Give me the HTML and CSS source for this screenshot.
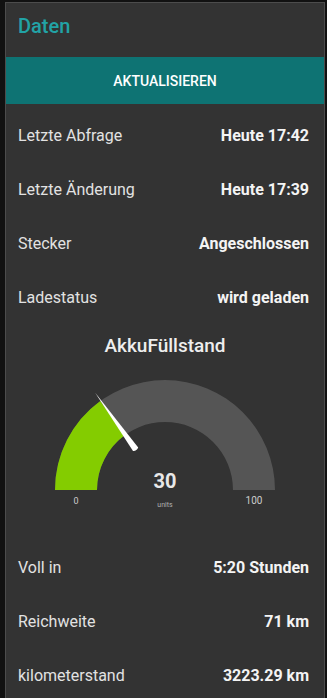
FILE: index.html
```html
<!DOCTYPE html>
<html lang="de">
<head>
    <meta charset="UTF-8">
    <meta name="viewport" content="width=device-width, initial-scale=1.0">
    <title>Daten</title>
    <link rel="stylesheet" href="styles.css">
</head>
<body>
    <div class="group">
        <h2 class="group-title">Daten</h2>
        <button class="refresh">Aktualisieren</button>

        <div class="row"><span class="label">Letzte Abfrage</span><span class="value">Heute 17:42</span></div>
        <div class="row"><span class="label">Letzte Änderung</span><span class="value">Heute 17:39</span></div>
        <div class="row"><span class="label">Stecker</span><span class="value">Angeschlossen</span></div>
        <div class="row"><span class="label">Ladestatus</span><span class="value">wird geladen</span></div>

        <!-- Gauge -->
        <div class="gauge">
            <div class="gauge-title">AkkuFüllstand</div>
            <svg class="gauge-svg" width="318" height="172" viewBox="0 0 318 172">
                <path d="M49 122 A110 110 0 0 1 269 122 L227 122 A68 68 0 0 0 91 122 Z" fill="#555555"/>
                <path d="M49 122 A110 110 0 0 1 94.3 33 L119 67 A68 68 0 0 0 91 122 Z" fill="#84cc00"/>
                <path d="M89 24.5 L132.2 79.6 Q130.6 83.4 127 83 Z" fill="#ffffff"/>
                <text x="159" y="120" class="g-value" text-anchor="middle">30</text>
                <text x="159" y="139" class="g-units" text-anchor="middle">units</text>
                <text x="70" y="136" class="g-min" text-anchor="middle">0</text>
                <text x="248" y="136" class="g-max" text-anchor="middle">100</text>
            </svg>
        </div>

        <div class="row"><span class="label">Voll in</span><span class="value">5:20 Stunden</span></div>
        <div class="row"><span class="label">Reichweite</span><span class="value">71 km</span></div>
        <div class="row"><span class="label">kilometerstand</span><span class="value">3223.29 km</span></div>
    </div>
</body>
</html>
```

FILE: styles.css
```css
/* Basic reset */
* {
    box-sizing: border-box;
    margin: 0;
    padding: 0;
}

body {
    background: #111111;
    font-family: Roboto, "Liberation Sans", sans-serif;
    color: #e6e6e6;
    padding: 2px 0 0 5px;
}

/* Group card */
.group {
    width: 320px;
    background: #333333;
    border: 1px solid #4c4c4c;
    border-bottom: none;
    height: 720px;
}

.group-title {
    height: 54px;
    padding: 11px 0 0 12px;
    font-size: 20px;
    line-height: 24px;
    font-weight: 500;
    color: #22a3a6;
}

.refresh {
    display: block;
    width: 100%;
    height: 47px;
    border: none;
    background: #0e7373;
    color: #ffffff;
    font-family: inherit;
    font-size: 14px;
    font-weight: 500;
    text-transform: uppercase;
    margin-bottom: 4px;
}

/* Text rows */
.row {
    height: 54px;
    display: flex;
    align-items: center;
    justify-content: space-between;
    padding: 0 15px 0 12px;
    font-size: 16px;
}

.label {
    color: #e2e2e2;
}

.value {
    font-weight: 700;
    color: #f4f4f4;
}

/* Gauge */
.gauge {
    height: 216px;
}

.gauge-title {
    height: 44px;
    line-height: 44px;
    text-align: center;
    font-size: 19px;
    font-weight: 500;
    color: #eeeeee;
}

.gauge-svg {
    display: block;
}

.g-value {
    font-family: Roboto, "Liberation Sans", sans-serif;
    font-size: 20px;
    font-weight: 700;
    fill: #e8e8e8;
}

.g-units {
    font-family: Roboto, "Liberation Sans", sans-serif;
    font-size: 7px;
    fill: #b0b0b0;
}

.g-min,
.g-max {
    font-family: Roboto, "Liberation Sans", sans-serif;
    font-size: 9px;
    fill: #cccccc;
}

.g-max {
    font-size: 10px;
}
```
